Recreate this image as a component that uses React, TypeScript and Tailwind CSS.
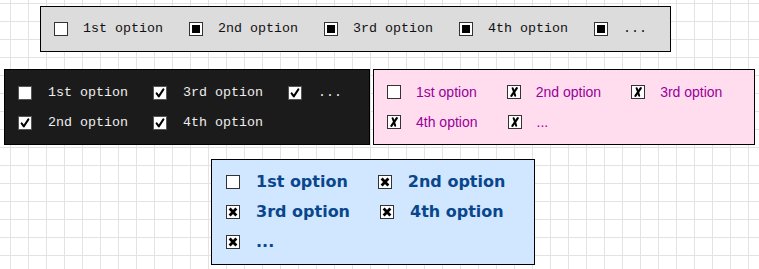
import React from "react";

type Kind = "square" | "check" | "cross" | "heavy";

function Box({ checked, kind, border }: { checked: boolean; kind: Kind; border: string }) {
  return (
    <span
      className={`relative flex h-[14px] w-[14px] shrink-0 items-center justify-center border bg-white ${border}`}
    >
      {checked && kind === "square" && <span className="block h-[8px] w-[8px] bg-black" />}
      {checked && kind === "check" && (
        <svg width="12" height="12" viewBox="0 0 12 12" className="block">
          <path d="M2.6 6.4 L4.8 9.4 L9.4 2.4" fill="none" stroke="#000" strokeWidth="2" strokeLinecap="round" strokeLinejoin="round" />
        </svg>
      )}
      {checked && kind === "cross" && (
        <svg width="12" height="12" viewBox="0 0 12 12" className="block">
          <path d="M4.6 2.2 C5.6 4.5 6.4 7 7.2 9.8" fill="none" stroke="#000" strokeWidth="2" strokeLinecap="round" />
          <path d="M8.8 2.2 C7.2 4.6 5.4 7.2 3.4 9.8" fill="none" stroke="#000" strokeWidth="2.2" strokeLinecap="round" />
        </svg>
      )}
      {checked && kind === "heavy" && (
        <svg width="12" height="12" viewBox="0 0 12 12" className="block">
          <path d="M2.6 2.6 L9.4 9.4 M9.4 2.6 L2.6 9.4" fill="none" stroke="#000" strokeWidth="2.8" strokeLinecap="butt" />
        </svg>
      )}
    </span>
  );
}

const labels = ["1st option", "2nd option", "3rd option", "4th option", "..."];

export default function App() {
  return (
    <div className="h-[269px] w-full overflow-hidden bg-white bg-[image:linear-gradient(to_right,#e3e3e3_1px,transparent_1px),linear-gradient(to_bottom,#e3e3e3_1px,transparent_1px)] bg-[size:18px_18px] bg-[position:10px_3px] pt-[6px]">
      {/* Panel 1 */}
      <div className="ml-[40px] flex h-[46px] w-[631px] items-center overflow-hidden border border-black bg-[#dcdcdc] pl-[13px] font-['Liberation_Mono',monospace] text-[13.33px] text-[#111]">
        {labels.map((l, i) => (
          <div key={l} className="mr-[26px] flex shrink-0 items-center gap-[15px] whitespace-nowrap">
            <Box checked={i > 0} kind="square" border="border-[#333]" />
            <span className="leading-none">{l}</span>
          </div>
        ))}
      </div>

      <div className="mt-[17px] flex">
        {/* Panel 2 */}
        <div className="ml-[4px] h-[76px] w-[366px] border border-black bg-[#1b1b1b] pl-[13px] pt-[8px] font-['Liberation_Mono',monospace] text-[13.33px] text-[#eeeeee]">
          <div className="grid grid-flow-col grid-rows-[30px_30px] auto-cols-[135px]">
            {labels.map((l, i) => (
              <div key={l} className="flex items-center gap-[16px] whitespace-nowrap">
                <Box checked={i > 0} kind="check" border="border-[#555]" />
                <span className="leading-none">{l}</span>
              </div>
            ))}
          </div>
        </div>

        {/* Panel 3 */}
        <div className="ml-[3px] h-[76px] w-[382px] border border-black bg-[#ffddee] pl-[13px] pt-[7px] font-['Liberation_Sans',Arial,sans-serif] text-[14px] text-[#990099]">
          <div className="flex flex-wrap gap-x-[30px]">
            {labels.map((l, i) => (
              <div key={l} className="flex h-[30px] items-center gap-[15px] whitespace-nowrap">
                <Box checked={i > 0} kind="cross" border="border-[#333]" />
                <span className="leading-none">{l}</span>
              </div>
            ))}
          </div>
        </div>
      </div>

      {/* Panel 4 */}
      <div className="ml-[211px] mt-[14px] h-[106px] w-[324px] border border-black bg-[#d0e7ff] pl-[14px] pt-[7px] font-['DejaVu_Sans',Verdana,sans-serif] text-[16px] font-bold text-[#0a468c]">
        <div className="flex flex-wrap gap-x-[30px]">
          {labels.map((l, i) => (
            <div key={l} className="flex h-[30px] items-center gap-[16px] whitespace-nowrap">
              <Box checked={i > 0} kind="heavy" border="border-[#333]" />
              <span className="leading-none">{l}</span>
            </div>
          ))}
        </div>
      </div>
    </div>
  );
}
